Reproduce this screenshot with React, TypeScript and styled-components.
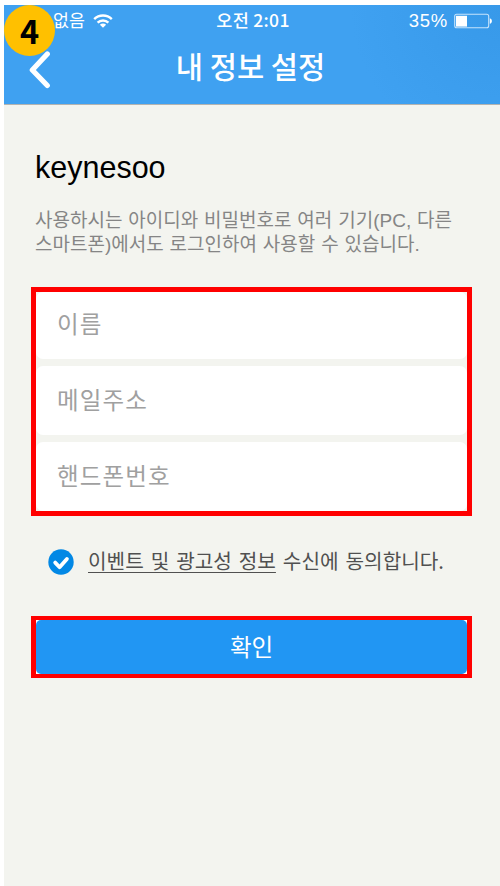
import * as React from 'react'
import styled, { createGlobalStyle } from 'styled-components'

const GlobalStyle = createGlobalStyle`
  * {
    box-sizing: border-box;
  }

  body {
    margin: 0;
    background: #fff;
    font-family: 'Liberation Sans', 'Noto Sans CJK KR', sans-serif;
  }
`

const Screen = styled.div`
  position: relative;
  height: 886px;
  padding: 5px 0 0 4px;
  display: flex;
  flex-direction: column;
  overflow: hidden;
`

const Header = styled.header`
  height: 100px;
  flex: none;
  color: #fff;
  border-bottom: 1px solid #b3b3b0;
  background: radial-gradient(circle at 100% 0, #3799e9 0, #3fa1f1 150px);
`

const StatusBar = styled.div`
  height: 31px;
  padding: 0 8px 0 49px;
  display: grid;
  grid-template-columns: 1fr auto 1fr;
  align-items: center;
  font-size: 18px;
`

const StatusGroup = styled.div<{ $end?: boolean }>`
  display: flex;
  align-items: center;
  justify-content: ${({ $end }) => ($end ? 'flex-end' : 'flex-start')};
  gap: ${({ $end }) => ($end ? 6 : 8)}px;
`

const Carrier = styled.span`
  padding-bottom: 2px;
  font-family: 'Noto Sans CJK KR', sans-serif;
  font-size: 17.3px;
  font-weight: 400;
  line-height: 24px;
`

const Clock = styled.span`
  margin-right: 39px;
  padding-bottom: 2px;
  font-family: 'Noto Sans CJK KR', sans-serif;
  font-size: 17.5px;
  font-weight: 500;
  line-height: 24px;
  letter-spacing: 0.3px;
`

const Battery = styled.span`
  font-size: 18.5px;
  letter-spacing: 0.7px;
`

const NavBar = styled.div`
  height: 60px;
  padding-left: 24px;
  display: grid;
  grid-template-columns: 24px 1fr 51px;
  align-items: center;
`

const Title = styled.h1`
  margin: 0;
  text-align: center;
  font-family: 'Noto Sans CJK KR', sans-serif;
  font-size: 29.6px;
  font-weight: 500;
  line-height: 40px;
`

const Body = styled.main`
  flex: 1;
  padding: 43px 28px 0 27px;
  background: #f3f4ef;
`

const Username = styled.h2`
  margin: 0 0 23px 4px;
  font-size: 30.5px;
  font-weight: 400;
  line-height: 38px;
  color: #000;
`

const Description = styled.p`
  margin: 0 0 30px 4px;
  font-family: 'Liberation Sans', 'Noto Sans CJK KR', sans-serif;
  font-size: 19px;
  font-weight: 400;
  line-height: 24px;
  word-spacing: 0.6px;
  color: #858585;
  white-space: nowrap;
`

const Fields = styled.div`
  height: 229px;
  border: 5px solid #f00;
  display: grid;
  grid-template-rows: 67px 69px 69px;
  gap: 7px;
`

const Field = styled.input`
  width: 100%;
  min-width: 0;
  padding: 0 20px 3px 21px;
  border: 0;
  border-radius: 7px;
  outline: 0;
  background: #fff;
  font-family: 'Noto Sans CJK KR', sans-serif;
  font-size: 23.5px;
  font-weight: 400;
  letter-spacing: 1.1px;

  &:first-child {
    padding-bottom: 5px;
  }

  &::placeholder {
    color: #a0a0a0;
    opacity: 1;
  }
`

const Agreement = styled.label`
  height: 100px;
  padding: 0 0 9px 17px;
  display: flex;
  align-items: center;
  gap: 14px;
  font-family: 'Noto Sans CJK KR', sans-serif;
  font-size: 20.2px;
  font-weight: 400;
  color: #505050;
  word-spacing: 2.4px;
  white-space: nowrap;
`

const AgreementText = styled.span`
  padding-bottom: 3px;
`

const Terms = styled.span`
  text-decoration: underline;
  text-decoration-thickness: 1px;
  text-underline-offset: 3px;
  text-decoration-skip-ink: none;
`

const SubmitFrame = styled.div`
  height: 62px;
  border: solid #f00;
  border-width: 4px 5px;
  display: flex;
  background: #fff;
`

const Submit = styled.button`
  flex: 1;
  padding: 0 0 3px;
  border: 0;
  border-radius: 5px;
  background: #2196f3;
  color: #fff;
  font-family: 'Noto Sans CJK KR', sans-serif;
  font-size: 23.5px;
  font-weight: 400;
`

const StepBadge = styled.div`
  position: absolute;
  top: 5px;
  left: 4px;
  width: 51px;
  height: 51px;
  padding-bottom: 2px;
  border-radius: 50%;
  display: flex;
  align-items: center;
  justify-content: center;
  background: #ffc000;
  color: #000;
  font-family: 'Noto Sans CJK KR', sans-serif;
  font-size: 32.5px;
  font-weight: 700;
  line-height: 48px;
`

const WifiIcon = () => (
  <svg width="20" height="14" viewBox="0 0 20 14" fill="none" stroke="#fff" strokeWidth="2.4">
    <path d="M1.2 5.2a12.4 12.4 0 0 1 17.6 0" />
    <path d="M4.6 8.7a7.7 7.7 0 0 1 10.8 0" />
    <path d="M10 13.8 6.9 10.7a4.3 4.3 0 0 1 6.2 0z" fill="#fff" stroke="none" />
  </svg>
)

const BatteryIcon = () => (
  <svg width="38" height="16" viewBox="0 0 38 16" fill="none">
    <rect x="0.7" y="1.2" width="34" height="13.6" rx="2" stroke="#c5e3fc" strokeWidth="1.1" />
    <rect x="2" y="2.8" width="11" height="10.8" fill="#fff" />
    <path d="M35.8 5.2c2.8.6 2.8 5 0 5.6z" fill="#fff" />
  </svg>
)

const BackIcon = () => (
  <svg width="24" height="46" viewBox="0 0 24 46" fill="none" stroke="#fff" strokeWidth="5.2">
    <path d="M19.3 11 4.3 27l15 15.5" strokeLinecap="round" strokeLinejoin="round" />
  </svg>
)

const CheckIcon = () => (
  <svg width="26" height="26" viewBox="0 0 26 26" fill="none">
    <circle cx="13" cy="13" r="12.7" fill="#0288e5" />
    <path
      d="m7.2 13.6 4.4 4.6 7.3-8.2"
      stroke="#fff"
      strokeWidth="3.8"
      strokeLinecap="round"
      strokeLinejoin="round"
    />
  </svg>
)

const fields = ['이름', '메일주소', '핸드폰번호']

const App = () => (
  <>
    <GlobalStyle />
    <Screen>
      <Header>
        <StatusBar>
          <StatusGroup>
            <Carrier>없음</Carrier>
            <WifiIcon />
          </StatusGroup>
          <Clock>오전 2:01</Clock>
          <StatusGroup $end>
            <Battery>35%</Battery>
            <BatteryIcon />
          </StatusGroup>
        </StatusBar>
        <NavBar>
          <BackIcon />
          <Title>내 정보 설정</Title>
        </NavBar>
      </Header>
      <Body>
        <Username>keynesoo</Username>
        <Description>
          사용하시는 아이디와 비밀번호로 여러 기기(PC, 다른
          <br />
          스마트폰)에서도 로그인하여 사용할 수 있습니다.
        </Description>
        <Fields>
          {fields.map(label => (
            <Field key={label} placeholder={label} />
          ))}
        </Fields>
        <Agreement>
          <CheckIcon />
          <AgreementText>
            <Terms>이벤트 및 광고성 정보</Terms> 수신에 동의합니다.
          </AgreementText>
        </Agreement>
        <SubmitFrame>
          <Submit type="button">확인</Submit>
        </SubmitFrame>
      </Body>
      <StepBadge>4</StepBadge>
    </Screen>
  </>
)

export default App
